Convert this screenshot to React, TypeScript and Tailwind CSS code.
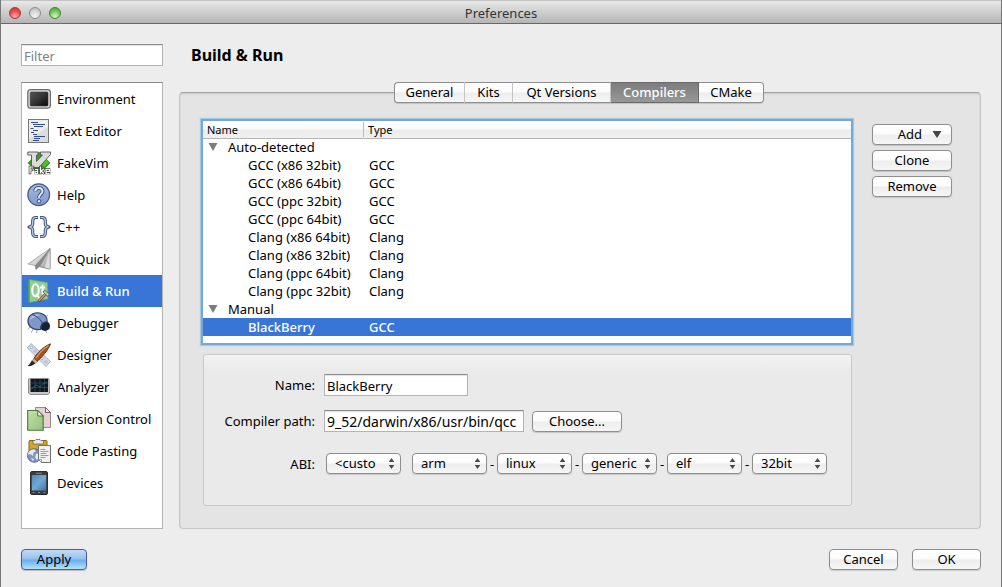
import { useState, type ReactNode } from "react";

const UI_FONT = "font-['Lucida_Grande','Noto_Sans','Open_Sans',sans-serif]";

const pushButton =
  "h-[21px] rounded-[4px] border border-[#8e8e8e] bg-[linear-gradient(#ffffff,#fbfbfb_48%,#ededed_52%,#f6f6f6)] text-center leading-[19px] shadow-[0_1px_1px_rgba(0,0,0,0.15)]";

const textField =
  "h-[22px] border border-[#b4b4b4] border-t-[#8c8c8c] bg-white px-[2px] pt-px leading-5 shadow-[inset_0_1px_1px_rgba(0,0,0,0.12)] outline-none";

function Svg({ children }: { children: ReactNode }) {
  return (
    <svg viewBox="0 0 24 24" className="size-6 shrink-0" aria-hidden="true">
      {children}
    </svg>
  );
}

const EnvironmentIcon = () => (
  <Svg>
    <defs>
      <linearGradient id="screen" x1="0" y1="0" x2="1" y2="1">
        <stop offset="0" stopColor="#555" />
        <stop offset=".5" stopColor="#333" />
        <stop offset="1" stopColor="#0c0c0c" />
      </linearGradient>
    </defs>
    <rect x=".8" y="2.6" width="22.6" height="18.6" rx="2.6" fill="#dedede" stroke="#6c6c6c" strokeWidth="1.3" />
    <rect x="3.2" y="5" width="17.8" height="14" rx="1" fill="url(#screen)" stroke="#333" strokeWidth=".6" />
  </Svg>
);

const TextEditorIcon = () => (
  <Svg>
    <rect x="1.5" y=".5" width="20" height="23" fill="#eeeeee" stroke="#777" />
    <path d="M2 20 21 8v15H2z" fill="#dcdcdc" />
    <path
      d="M4 3.5h7M6 5.5h12M7 7.5h9M3.500 9.500h3M6 11.500h5M4 13.500h3M6 15.500h4M7 17.500h11M7 19.500h6M6 21.500h6"
      stroke="#34508a"
      strokeWidth="1.1"
    />
  </Svg>
);

const FakeVimIcon = () => (
  <Svg>
    <path d="m12 .5 11.500 11.500L12 23.500.5 12z" fill="#3a9c1e" />
    <path d="m17 5.500 5 6-5 5-4-5z" fill="#4fbd28" />
    <path
      d="M.8 1h10.200v3H9.500v6.500L15.500 4H13.500V1h10v2.500L12 16.500H4.500V4H.8z"
      fill="#dcdcdc"
      stroke="#555"
      strokeWidth=".9"
    />
    <g fill="none" stroke="#444" strokeWidth="2.600" strokeLinecap="square">
      <path d="M3 22v-6h3M3 19h2M8.500 18.500h2V22h-2v-1.500h2M13.500 16v6m3-4-2 2 2 2M19 20h3v-1.500h-3V22h3" />
    </g>
    <g fill="none" stroke="#fff" strokeWidth="1.200">
      <path d="M3 22.500V16h3.500M3 19h2.500M8 18.500h2.500v4H8v-2h2.500M13.500 15.500v7m3.500-4.500-3 2 3 2.500M19 20.500h3.500v-2H19v4h3.500" />
    </g>
  </Svg>
);

const HelpIcon = () => (
  <Svg>
    <defs>
      <linearGradient id="help" x1="0" y1="0" x2="0" y2="1">
        <stop offset="0" stopColor="#a5b7dc" />
        <stop offset="1" stopColor="#7f9bd0" />
      </linearGradient>
    </defs>
    <circle cx="11.700" cy="11.700" r="10.900" fill="url(#help)" stroke="#4a5c82" strokeWidth="1.200" />
    <path d="M8.200 8.300C8.400 3.600 16 3.900 15.400 8.600c-.4 2.600-3.600 2.900-3.400 6.300" fill="none" stroke="#40557f" strokeWidth="4" />
    <circle cx="12" cy="18.300" r="2.200" fill="#40557f" />
    <path d="M8.200 8.300C8.400 3.600 16 3.900 15.400 8.600c-.4 2.600-3.600 2.900-3.400 6.300" fill="none" stroke="#dfe7f5" strokeWidth="2" />
    <circle cx="12" cy="18.300" r="1.200" fill="#dfe7f5" />
  </Svg>
);

const CppIcon = () => (
  <Svg>
    <g fill="none" strokeLinejoin="round">
      <g stroke="#43587f" strokeWidth="3.200">
        <path d="M11 2.500H9Q5.700 2.500 5.700 6v2.500Q5.700 11.500 2 12q3.700.5 3.700 3.500V18q0 3.500 3.300 3.500h2" />
        <path d="M13 2.500h2q3.300 0 3.300 3.500v2.500q0 3 3.700 3.500-3.700.5-3.700 3.500V18q0 3.500-3.300 3.500h-2" />
      </g>
      <g stroke="#c3d0e8" strokeWidth="1.200">
        <path d="M10.500 2.500H9Q5.700 2.500 5.700 6v2.500Q5.700 11.500 2.500 12q3.200.5 3.200 3.500V18q0 3.500 3.300 3.500h1.500" />
        <path d="M13.500 2.500H15q3.300 0 3.300 3.500v2.500q0 3 3.200 3.500-3.200.5-3.200 3.500V18q0 3.500-3.300 3.500h-1.500" />
      </g>
    </g>
  </Svg>
);

const QtQuickIcon = () => (
  <Svg>
    <path d="M23 1.500 1 17l7 1.500 1 4 3.500-3L23 22z" fill="#d5d5d5" stroke="#9a9a9a" strokeWidth=".7" />
    <path d="M23 1.500 8 18.500l1 4 3.500-3z" fill="#888" />
    <path d="M23 1.500 12.500 19.500 23 22z" fill="#b9b9b9" stroke="#777" strokeWidth=".7" />
    <path d="M22.500 3 18 20.500l4.800 1.200z" fill="#dedede" />
  </Svg>
);

const BuildIcon = () => (
  <Svg>
    <path d="M2.500.5 20.500 3.500 21 20 2.500 23.500 1.500 22V1.500z" fill="#8fce90" stroke="#5ca66b" strokeWidth=".8" />
    <path d="M2 1v22" stroke="#4f9560" strokeWidth="1.400" />
    <ellipse cx="8.500" cy="11.300" rx="3.200" ry="6" fill="none" stroke="#fff" strokeWidth="2" />
    <path d="m9 15 3.500 4.500M15.500 5.500v8.500q0 1.500 2 1M13 8.500h5" fill="none" stroke="#fff" strokeWidth="1.800" />
    <path d="m11.500 22.500 7-7.500" stroke="#704328" strokeWidth="2.600" />
    <path d="m11.800 22 7-7.500" stroke="#d89468" strokeWidth="1.500" />
    <path d="m16 12.800 2.200-1.300 4 3.800-1.200 2.200-3.500-3z" fill="#c6c6c6" stroke="#555" strokeWidth=".8" />
  </Svg>
);

const DebuggerIcon = () => (
  <Svg>
    <path d="m3.500 15-2.500 3.500m5-1-1.500 4m5.500-2.500-.5 3m9-2.500 1.500 2.500m1.500-5 2 1.500M18 6l3-1.500" fill="none" stroke="#a3a8b2" strokeWidth="1" />
    <circle cx="18" cy="15" r="5" fill="#17202e" />
    <path d="M1 9.500C1.500 3 9 .5 14.500 2.500c4 1.500 6 5 5.500 8.500-4-.5-6.500 2-6.500 7.500C6 19.500.5 15 1 9.500z" fill="#7f98ca" stroke="#33456b" strokeWidth="1.200" />
    <path d="M3 8.500C4 4.500 9 2.500 13.500 4 8 5 5.500 7.500 3 8.500z" fill="#b7c6e3" />
    <path d="M5 3.500c5 1.500 9.500 5.500 10.500 9.500" fill="none" stroke="#33456b" />
  </Svg>
);

const DesignerIcon = () => (
  <Svg>
    <path d="m4 .5 19.500 18-4.500 5L.5 5z" fill="#d5ddeb" stroke="#93a1bb" strokeWidth=".8" />
    <g fill="#fff" stroke="#93a1bb" strokeWidth=".8">
      <circle cx="4.500" cy="4.500" r="1.200" />
      <circle cx="8" cy="8" r="1.200" />
      <circle cx="15" cy="15.500" r="1.300" />
      <circle cx="19" cy="19" r="1.200" />
    </g>
    <path d="M23.500.8C18 3 10 9 7 15.500l3 3C15 14 21.500 7 23.500.8z" fill="#a8521d" stroke="#5d2a0e" strokeWidth=".9" />
    <path d="M21.500 2.500C17 5.500 12 10 9 15" fill="none" stroke="#df9a67" strokeWidth="1.300" />
    <path d="m7.200 15.500 3 3-2 2-3-3z" fill="#d1b48a" stroke="#655039" strokeWidth=".6" />
    <path d="m5 17.500 3.200 3C6 22.500 3 23.500.5 23 3 21.500 3.500 19 5 17.500z" fill="#2d251f" />
  </Svg>
);

const AnalyzerIcon = () => (
  <Svg>
    <path d="M1.500 4 4 3.500h17l1 .5.500 14-2 1.500H3.500L1.500 18z" fill="#c7c7c7" stroke="#777" strokeWidth=".8" />
    <path d="M3.500 4h17.500v13H3.500z" fill="#101820" />
    <path d="M4 8h17M4 12.500h17M8 4v13M13 4v13M17.500 4v13" stroke="#4a5f6d" strokeWidth=".5" />
    <path d="M4 14c3 0 3-4 5-4s3 3 5 1 4-4 6-3" fill="none" stroke="#2f7598" strokeWidth=".7" />
  </Svg>
);

const VersionControlIcon = () => (
  <Svg>
    <path d="M8.500.5h10l5 5v15h-15z" fill="#e5d2d5" stroke="#98888b" />
    <path d="M18.500.5v5h5z" fill="#f5eded" stroke="#755f63" />
    <defs>
      <linearGradient id="sheet" x1="0" y1="0" x2="1" y2="1">
        <stop offset="0" stopColor="#c6e3a9" />
        <stop offset="1" stopColor="#90c17c" />
      </linearGradient>
    </defs>
    <path d="M.7 3.500h10l5.500 5.500v14.200H.7z" fill="url(#sheet)" stroke="#4d743f" strokeWidth="1.100" />
    <path d="M10.700 3.500V9h5.500z" fill="#e5f5d3" stroke="#4d743f" />
  </Svg>
);

const CodePastingIcon = () => (
  <Svg>
    <rect x="2" y="1.500" width="18" height="18" rx="1" fill="#d4a52c" stroke="#876314" />
    <path d="M6 1.500h2L9 .5h4l1 1h2.500V5H6z" fill="#e8e8e8" stroke="#666" strokeWidth=".8" />
    <circle cx="7.200" cy="16.500" r="6.800" fill="#7e94bf" stroke="#485d88" strokeWidth=".8" />
    <path d="M3 11.500 7 10l2 2.500-2.500 1L6 17l-3-2-2 1c0-2 .8-3.500 2-4.500zM9 15l4-1v4l-3 3-2-2.500zM4 19l3 1-1 2.500z" fill="#e1e8f4" />
    <path d="M11.500 6.500h12v17h-9l-3-3z" fill="#f1f1f1" stroke="#707070" />
    <path d="M13.500 10.500h5m-5 2h8m-8 2h6m-6 2h8m-8 2h5" stroke="#9b9b9b" />
    <path d="M11.500 20.500h3v3z" fill="#fff" stroke="#808080" strokeWidth=".7" />
  </Svg>
);

const DevicesIcon = () => (
  <Svg>
    <defs>
      <linearGradient id="device" x1="0" y1="0" x2="1" y2="1">
        <stop offset="0" stopColor="#4f88b8" />
        <stop offset=".5" stopColor="#73a9d2" />
        <stop offset="1" stopColor="#3b77a9" />
      </linearGradient>
    </defs>
    <rect x="3.500" y=".5" width="17" height="23" rx="1.500" fill="#3c3c3c" stroke="#2b2b2b" />
    <rect x="4.800" y="4" width="14.400" height="15.500" fill="url(#device)" />
    <path d="M9 2.300h6" stroke="#888" />
    <path d="M5.500 21.500h2m3.500 0h2m3.500 0h2" stroke="#999" strokeWidth=".8" />
  </Svg>
);

const categories = [
  { name: "Environment", Icon: EnvironmentIcon },
  { name: "Text Editor", Icon: TextEditorIcon },
  { name: "FakeVim", Icon: FakeVimIcon },
  { name: "Help", Icon: HelpIcon },
  { name: "C++", Icon: CppIcon },
  { name: "Qt Quick", Icon: QtQuickIcon },
  { name: "Build & Run", Icon: BuildIcon },
  { name: "Debugger", Icon: DebuggerIcon },
  { name: "Designer", Icon: DesignerIcon },
  { name: "Analyzer", Icon: AnalyzerIcon },
  { name: "Version Control", Icon: VersionControlIcon },
  { name: "Code Pasting", Icon: CodePastingIcon },
  { name: "Devices", Icon: DevicesIcon },
];

const tabs = [
  { name: "General", width: "w-[71px]" },
  { name: "Kits", width: "w-12" },
  { name: "Qt Versions", width: "w-[98px]" },
  { name: "Compilers", width: "w-[88px]" },
  { name: "CMake", width: "w-[65px]" },
];

const groups = [
  {
    name: "Auto-detected",
    items: [
      ["GCC (x86 32bit)", "GCC"],
      ["GCC (x86 64bit)", "GCC"],
      ["GCC (ppc 32bit)", "GCC"],
      ["GCC (ppc 64bit)", "GCC"],
      ["Clang (x86 64bit)", "Clang"],
      ["Clang (x86 32bit)", "Clang"],
      ["Clang (ppc 64bit)", "Clang"],
      ["Clang (ppc 32bit)", "Clang"],
    ],
  },
  { name: "Manual", items: [["BlackBerry", "GCC"]] },
];

const abiParts = [
  { label: "Architecture", value: "arm" },
  { label: "System", value: "linux" },
  { label: "Flavor", value: "generic" },
  { label: "Format", value: "elf" },
  { label: "Word width", value: "32bit" },
];

function Popup({ label, value, id }: { label: string; value: string; id?: string }) {
  return (
    <span className="relative">
      <select
        id={id}
        aria-label={label}
        defaultValue={value}
        className={`${pushButton} block w-[75px] appearance-none pl-2 text-left outline-none`}
      >
        <option>{value}</option>
      </select>
      <svg viewBox="0 0 7 11" className="pointer-events-none absolute top-[5px] right-1.5 h-[11px] w-[7px]" aria-hidden="true">
        <path d="M3.500 0 6.300 4H.7zM3.500 11 .7 7h5.600z" fill="#4a4a4a" />
      </svg>
    </span>
  );
}

function Disclosure() {
  return (
    <svg viewBox="0 0 10 8" className="mr-2.5 h-2 w-2.5" aria-hidden="true">
      <path d="M.5 0h9L5 8z" fill="#7c7c7c" />
    </svg>
  );
}

export default function App() {
  const [category, setCategory] = useState("Build & Run");
  const [tab, setTab] = useState("Compilers");
  const [compiler, setCompiler] = useState("BlackBerry");

  return (
    <div
      className={`flex min-h-screen flex-col border-x border-[#777] bg-[#ededed] text-[13px] leading-4 text-black ${UI_FONT}`}
    >
      <header className="relative flex h-6 items-center justify-center border-t border-b border-t-[#c4c4c4] border-b-[#676767] bg-[linear-gradient(#e8e8e8,#b5b5b5)] pt-[2px] text-[#333]">
        <div className="absolute left-2 flex gap-2">
          <button aria-label="Close" className="size-3 rounded-full border border-[#a13a3a] bg-[radial-gradient(circle_at_50%_85%,#ffb3ab,#ef4c4c_55%,#c83434)]" />
          <button aria-label="Minimize" className="size-3 rounded-full border border-[#8a8a8a] bg-[radial-gradient(circle_at_50%_85%,#f5f5f5,#d5d5d5_55%,#b4b4b4)]" />
          <button aria-label="Zoom" className="size-3 rounded-full border border-[#43803c] bg-[radial-gradient(circle_at_50%_85%,#d8f7bd,#78c65d_55%,#4b9c3d)]" />
        </div>
        <h1>Preferences</h1>
      </header>

      <div className="flex flex-1 gap-4 px-5 pt-5">
        <aside className="flex w-[142px] shrink-0 flex-col gap-4">
          <input aria-label="Filter" placeholder="Filter" className={`${textField} placeholder:text-[#808080]`} />
          <ul className="flex-1 border border-[#b4b4b4] border-t-[#8c8c8c] bg-white">
            {categories.map(({ name, Icon }) => (
              <li key={name}>
                <button
                  onClick={() => setCategory(name)}
                  className={`flex h-8 w-full items-center gap-[6px] pl-[5px] text-left whitespace-nowrap ${
                    category === name ? "bg-[#3875d7] font-medium text-white" : ""
                  }`}
                >
                  <Icon />
                  {name}
                </button>
              </li>
            ))}
          </ul>
        </aside>

        <main className="flex min-w-0 flex-1 flex-col">
          <h2 className="pt-[2px] pl-3 text-base leading-[18px] font-bold">{category}</h2>

          <div role="tablist" className="relative z-10 mt-[18px] mr-[2px] flex self-center rounded-[4px] shadow-[0_1px_1px_rgba(0,0,0,0.15)]">
            {tabs.map(({ name, width }) => (
              <button
                key={name}
                role="tab"
                aria-selected={tab === name}
                onClick={() => setTab(name)}
                className={`${width} h-[21px] border-y border-r leading-[19px] first:rounded-l-[4px] first:border-l last:rounded-r-[4px] last:border-r-[#8e8e8e] ${
                  tab === name
                    ? "border-[#6a6a6a] bg-[linear-gradient(#7c7c7c,#989898)] font-medium text-white"
                    : "border-y-[#8e8e8e] border-r-[#c4c4c4] border-l-[#8e8e8e] bg-[linear-gradient(#ffffff,#fbfbfb_48%,#ededed_52%,#f6f6f6)]"
                }`}
              >
                {name}
              </button>
            ))}
          </div>

          <section className="-mt-[11px] flex flex-1 gap-5 rounded-[4px] border border-[#c6c6c6] border-t-[#a0a0a0] bg-[#e4e4e4] pt-7 pr-7 pb-[22px] pl-[23px] shadow-[inset_0_1px_2px_rgba(0,0,0,0.12)]">
            <div className="flex min-w-0 flex-1 flex-col gap-[11px]">
              <div className="mr-px flex-1 bg-white shadow-[0_0_0_2px_#73a9d5,0_0_1px_3px_#a7c8e2]">
                <table className="w-full table-fixed border-collapse text-left">
                  <colgroup>
                    <col className="w-[161px]" />
                    <col />
                  </colgroup>
                  <thead className="bg-[linear-gradient(#ffffff,#fafafa_45%,#ececec_55%,#f0f0f0)] text-[11px]">
                    <tr className="h-[17px] border-b border-[#b5b5b5]">
                      <th className="p-0 pl-1 font-normal">
                        <div className="border-r border-[#bdbdbd] pt-px leading-[14px]">Name</div>
                      </th>
                      <th className="p-0 pt-px pl-1 leading-[14px] font-normal">Type</th>
                    </tr>
                  </thead>
                  {groups.map((group) => (
                    <tbody key={group.name}>
                      <tr className="h-[18px]">
                        <td className="p-0 pl-[5px]" colSpan={2}>
                          <span className="flex items-center">
                            <Disclosure />
                            {group.name}
                          </span>
                        </td>
                      </tr>
                      {group.items.map(([name, type]) => (
                        <tr
                          key={name}
                          onClick={() => setCompiler(name)}
                          className={`h-[18px] ${compiler === name ? "bg-[#3875d7] font-medium text-white" : ""}`}
                        >
                          <td className="p-0 pl-[45px] whitespace-nowrap">{name}</td>
                          <td className="p-0 pl-[5px]">{type}</td>
                        </tr>
                      ))}
                    </tbody>
                  ))}
                </table>
              </div>

              <form
                onSubmit={(event) => event.preventDefault()}
                className="grid grid-cols-[111px_1fr] items-center gap-x-[9px] gap-y-[14px] rounded-[3px] border border-[#c9c9c9] bg-[linear-gradient(#f3f3f3,#eaeaea_16px)] pt-[19px] pb-[31px]"
              >
                <label htmlFor="name" className="text-right">
                  Name:
                </label>
                <input id="name" defaultValue="BlackBerry" className={`${textField} w-36`} />
                <label htmlFor="path" className="text-right">
                  Compiler path:
                </label>
                <div className="flex items-center gap-2">
                  <input id="path" defaultValue="9_52/darwin/x86/usr/bin/qcc" className={`${textField} w-[200px] text-sm`} />
                  <button type="button" className={`${pushButton} w-[90px]`}>
                    Choose...
                  </button>
                </div>
                <label htmlFor="abi" className="pt-[7px] text-right">
                  ABI:
                </label>
                <div className="flex items-center pt-[7px] pl-[2px]">
                  <Popup id="abi" label="ABI" value="<custo" />
                  {abiParts.map(({ label, value }, index) => (
                    <span key={label} className="flex items-center">
                      <span className={index > 0 ? "w-[10px] text-center" : "w-[11px]"}>{index > 0 && "-"}</span>
                      <Popup label={label} value={value} />
                    </span>
                  ))}
                </div>
              </form>
            </div>

            <div className="flex w-20 shrink-0 flex-col gap-[5px] pt-[3px]">
              <button className={`${pushButton} flex items-center justify-end gap-2.5 pr-[9px]`}>
                Add
                <svg viewBox="0 0 10 7" className="h-[7px] w-2.5" aria-hidden="true">
                  <path d="M.5 0h9L5 7z" fill="#444" />
                </svg>
              </button>
              <button className={pushButton}>Clone</button>
              <button className={pushButton}>Remove</button>
            </div>
          </section>
        </main>
      </div>

      <footer className="flex gap-[14px] px-5 pt-5 pb-[17px]">
        <button className="mr-auto h-[21px] w-[66px] rounded-[4px] border border-[#50589c] bg-[linear-gradient(#c3dbf5,#94c1f0_48%,#68abeb_52%,#b4e2fb)] leading-[19px] shadow-[0_1px_1px_rgba(0,0,0,0.2)]">
          Apply
        </button>
        <button className={`${pushButton} w-[69px]`}>Cancel</button>
        <button className={`${pushButton} w-[69px]`}>OK</button>
      </footer>
    </div>
  );
}
